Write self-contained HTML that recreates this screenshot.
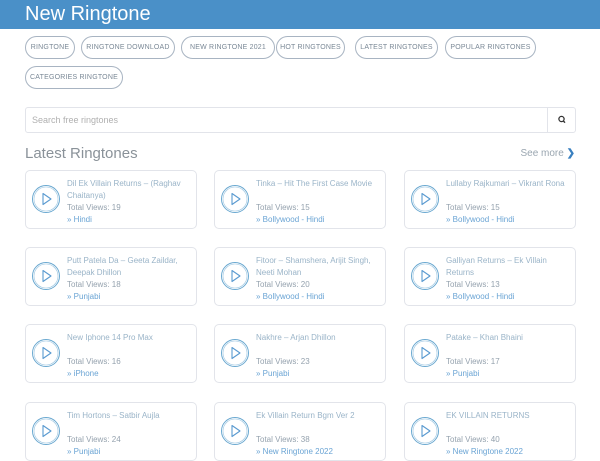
<!DOCTYPE html><html><head><style>
*{box-sizing:border-box;margin:0;padding:0}
body{width:600px;height:450px;overflow:hidden;background:#fff;font-family:"Liberation Sans",sans-serif;color:#888}
.hd{height:29px;background:#4a90c8;color:#fff;font-size:20px;padding:3px 0 0 25px;font-weight:300}
.pill{position:absolute;height:23px;border:1px solid #a8b4c2;border-radius:12px;font-size:7px;color:#7a8896;text-align:center;line-height:21px;letter-spacing:.2px}
.search{position:absolute;left:25px;top:107px;width:551px;height:26px;border:1px solid #e2e4ea;border-radius:3px;font-size:9px;color:#b0b0b0;padding:7px 6px}
.sb{position:absolute;right:0;top:0;width:28px;height:24px;border-left:1px solid #e2e4ea}
.card{position:absolute;width:172px;height:59px;border:1px solid #e2e4ea;border-radius:5px}
.ic{position:absolute;left:5px;top:13px;width:30px;height:30px}
.t{position:absolute;left:41px;top:7px;right:4px;font-size:8px;line-height:12px;color:#9ab4c8}
.v{font-size:8px;color:#95a2ae}
.c{font-size:8px;color:#6aa4d4}
</style></head><body>
<div class="hd">New Ringtone</div>
<div class="pill" style="left:25px;top:36px;width:50px">RINGTONE</div>
<div class="pill" style="left:81px;top:36px;width:94px">RINGTONE DOWNLOAD</div>
<div class="pill" style="left:181px;top:36px;width:94px">NEW RINGTONE 2021</div>
<div class="pill" style="left:276px;top:36px;width:69px">HOT RINGTONES</div>
<div class="pill" style="left:355px;top:36px;width:83px">LATEST RINGTONES</div>
<div class="pill" style="left:445px;top:36px;width:91px">POPULAR RINGTONES</div>
<div class="pill" style="left:25px;top:66px;width:98px">CATEGORIES RINGTONE</div>
<div class="search">Search free ringtones<div class="sb"><svg width="28" height="24"><circle cx="13.5" cy="11" r="2.6" fill="none" stroke="#333" stroke-width="1.3"/><line x1="15.4" y1="13" x2="17" y2="14.7" stroke="#333" stroke-width="1.4"/></svg></div></div>
<div style="position:absolute;left:25px;top:145px;font-size:15px;color:#8a9299;font-weight:300">Latest Ringtones</div>
<div style="position:absolute;right:25px;top:148px;font-size:10px;color:#9aa6b0">See more <b style="color:#3a80c0">&#x276F;</b></div>
<div id="g"></div>
<script>
var d=[["Dil Ek Villain Returns – (Raghav Chaitanya)","19","Hindi",2],["Tinka – Hit The First Case Movie","15","Bollywood - Hindi",1],["Lullaby Rajkumari – Vikrant Rona","15","Bollywood - Hindi",1],
["Putt Patela Da – Geeta Zaildar, Deepak Dhillon","18","Punjabi",2],["Fitoor – Shamshera, Arijit Singh, Neeti Mohan","20","Bollywood - Hindi",2],["Galliyan Returns – Ek Villain Returns","13","Bollywood - Hindi",2],
["New Iphone 14 Pro Max","16","iPhone",1],["Nakhre – Arjan Dhillon","23","Punjabi",1],["Patake – Khan Bhaini","17","Punjabi",1],
["Tim Hortons – Satbir Aujla","24","Punjabi",1],["Ek Villain Return Bgm Ver 2","38","New Ringtone 2022",1],["EK VILLAIN RETURNS","40","New Ringtone 2022",1]];
var xs=[25,214,404],ys=[170,247,324,402],h="";
d.forEach(function(e,i){var x=xs[i%3],y=ys[Math.floor(i/3)];
var gap=e[3]==1?'<div style="height:12px"></div>':'';
h+='<div class="card" style="left:'+x+'px;top:'+y+'px"><svg class="ic" viewBox="0 0 30 30"><circle cx="15" cy="15" r="13.5" fill="none" stroke="#6aa8d0" stroke-width="1"/><circle cx="15" cy="15" r="12" fill="none" stroke="#9ac4e0" stroke-width=".6"/><path d="M12 9.5 L20 15 L12 20.5 Z" fill="none" stroke="#5a9ad0" stroke-width="1.1" stroke-linejoin="round"/></svg><div class="t">'+e[0]+gap+'<div class="v">Total Views: '+e[1]+'</div><div class="c">&#187; '+e[2]+'</div></div></div>';});
document.getElementById("g").innerHTML=h;
</script>
</body></html>
